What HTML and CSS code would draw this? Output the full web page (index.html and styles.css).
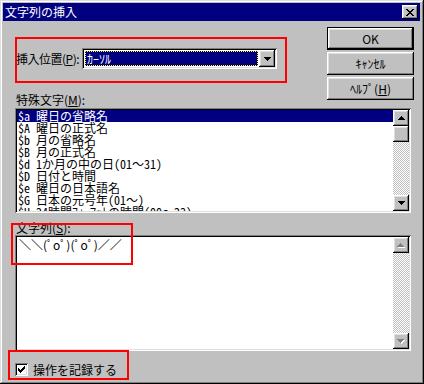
FILE: index.html
```html
<!DOCTYPE html>
<html lang="ja">
<head>
  <meta charset="UTF-8" />
  <title>文字列の挿入</title>
  <link rel="stylesheet" href="styles.css">
</head>
<body>
  <div class="window">
    <div class="titlebar">
      <span class="title">文字列の挿入</span>
      <span class="close raised">
        <svg width="8" height="7" viewBox="0 0 8 7" shape-rendering="crispEdges"><path d="M0 0h2v1h-2zM6 0h2v1h-2zM1 1h2v1h-2zM5 1h2v1h-2zM2 2h4v1h-4zM3 3h2v1h-2zM2 4h4v1h-4zM1 5h2v1h-2zM5 5h2v1h-2zM0 6h2v1h-2zM6 6h2v1h-2z" fill="#000"/></svg>
      </span>
    </div>

    <div class="dialog">
      <div class="top">
        <div class="left">
          <div class="pos-row">
            <span class="pos-label">挿入位置(<u>P</u>):</span>
            <div class="combo sunken">
              <div class="combo-value"><span class="focus">ｶｰｿﾙ</span></div>
              <div class="combo-btn raised">
                <svg width="7" height="4" viewBox="0 0 7 4" shape-rendering="crispEdges"><path d="M0 0h7v1h-7zM1 1h5v1h-5zM2 2h3v1h-3zM3 3h1v1h-1z" fill="#000"/></svg>
              </div>
            </div>
          </div>
          <div class="label label-list">特殊文字(<u>M</u>):</div>
        </div>
        <div class="buttons">
          <div class="btn btn-default"><span class="btn-face">OK</span></div>
          <div class="btn raised">ｷｬﾝｾﾙ</div>
          <div class="btn raised">ﾍﾙﾌﾟ(<u>H</u>)</div>
        </div>
      </div>

      <div class="listbox sunken">
        <ul class="items">
          <li class="selected">$a 曜日の省略名</li>
          <li>$A 曜日の正式名</li>
          <li>$b 月の省略名</li>
          <li>$B 月の正式名</li>
          <li>$d 1か月の中の日(01～31)</li>
          <li>$D 日付と時間</li>
          <li>$e 曜日の日本語名</li>
          <li>$G 日本の元号年(01～)</li>
          <li>$H 24時間ﾌｫｰﾏｯﾄの時間(00～23)</li>
        </ul>
        <div class="scrollbar">
          <div class="sb-btn raised">
            <svg width="7" height="4" viewBox="0 0 7 4" shape-rendering="crispEdges"><path d="M3 0h1v1h-1zM2 1h3v1h-3zM1 2h5v1h-5zM0 3h7v1h-7z" fill="#000"/></svg>
          </div>
          <div class="sb-thumb raised"></div>
          <div class="sb-track"></div>
          <div class="sb-btn raised">
            <svg width="7" height="4" viewBox="0 0 7 4" shape-rendering="crispEdges"><path d="M0 0h7v1h-7zM1 1h5v1h-5zM2 2h3v1h-3zM3 3h1v1h-1z" fill="#000"/></svg>
          </div>
        </div>
      </div>

      <div class="label label-text">文字列(<u>S</u>):</div>
      <div class="textbox sunken">
        <div class="text">＼＼(ﾟoﾟ)(ﾟoﾟ)／／</div>
        <div class="scrollbar">
          <div class="sb-btn raised">
            <svg width="8" height="5" viewBox="0 0 8 5" shape-rendering="crispEdges"><path d="M4 1h1v1h-1zM3 2h3v1h-3zM2 3h5v1h-5zM1 4h7v1h-7z" fill="#fff"/><path d="M3 0h1v1h-1zM2 1h3v1h-3zM1 2h5v1h-5zM0 3h7v1h-7z" fill="#808080"/></svg>
          </div>
          <div class="sb-track"></div>
          <div class="sb-btn raised">
            <svg width="8" height="5" viewBox="0 0 8 5" shape-rendering="crispEdges"><path d="M1 1h7v1h-7zM2 2h5v1h-5zM3 3h3v1h-3zM4 4h1v1h-1z" fill="#fff"/><path d="M0 0h7v1h-7zM1 1h5v1h-5zM2 2h3v1h-3zM3 3h1v1h-1z" fill="#808080"/></svg>
          </div>
        </div>
      </div>

      <div class="check-row">
        <span class="checkbox sunken">
          <svg width="7" height="7" viewBox="0 0 7 7" shape-rendering="crispEdges"><path d="M6 0h1v1h-1zM5 1h2v1h-2zM0 2h1v1h-1zM4 2h3v1h-3zM0 3h2v1h-2zM3 3h3v1h-3zM0 4h5v1h-5zM1 5h3v1h-3zM2 6h1v1h-1z" fill="#000"/></svg>
        </span>
        <span>操作を記録する</span>
      </div>
    </div>

    <div class="mark mark-pos"></div>
    <div class="mark mark-text"></div>
    <div class="mark mark-check"></div>
  </div>
</body>
</html>
```

FILE: styles.css
```css
:root {
  --face: #c0c0c0;
  --light: #dfdfdf;
  --shadow: #808080;
  --navy: #000080;
  --jp: "Noto Sans CJK JP", sans-serif;
  --jp-mono: "Noto Sans Mono CJK JP", "Noto Sans CJK JP", monospace;
}
* { box-sizing: border-box; }
body {
  margin: 0;
  background: var(--face);
  color: #000;
  font-family: var(--jp);
  font-size: 12px;
  line-height: 12px;
}
u { text-underline-offset: 1px; }

.raised {
  background: var(--face);
  box-shadow: inset -1px -1px #000, inset 1px 1px #fff, inset -2px -2px var(--shadow), inset 2px 2px var(--light);
}
.sunken {
  box-shadow: inset 1px 1px var(--shadow), inset -1px -1px #fff, inset 2px 2px #000, inset -2px -2px var(--light);
}

.window {
  position: relative;
  width: 424px;
  height: 384px;
  padding: 3px;
  background: var(--face);
  box-shadow: inset -1px -1px #000, inset 1px 1px var(--light), inset -2px -2px var(--shadow), inset 2px 2px #fff;
}
.titlebar {
  height: 18px;
  margin-right: 1px;
  padding: 0 2px 0 2px;
  background: var(--navy);
  color: #fff;
  display: flex;
  align-items: center;
  justify-content: space-between;
}
.title { line-height: 18px; }
.close {
  width: 16px;
  height: 14px;
  display: flex;
  align-items: center;
  justify-content: center;
}

.dialog {
  display: flex;
  flex-direction: column;
  padding: 0 10px 0 12px;
}
.top {
  display: flex;
  justify-content: space-between;
  height: 85px;
}
.left { display: flex; flex-direction: column; }
.pos-row {
  margin-top: 27px;
  height: 21px;
  display: flex;
  align-items: center;
}
.pos-label {
  width: 67px;
  flex: none;
  padding-left: 1px;
  white-space: nowrap;
  letter-spacing: -0.5px;
}
.label { padding-left: 1px; height: 12px; white-space: nowrap; }
.label-list { margin-top: 25px; }
.label-text { margin-top: 9px; }

.combo {
  width: 195px;
  height: 21px;
  padding: 2px;
  background: #fff;
  display: flex;
}
.combo-value {
  flex: 1;
  padding: 1px;
  display: flex;
}
.focus {
  flex: 1;
  background: var(--navy);
  color: #fff;
  border: 1px dotted #ffff00;
  padding-left: 1px;
  line-height: 13px;
}
.combo-btn {
  width: 16px;
  display: flex;
  align-items: center;
  justify-content: center;
}

.buttons {
  width: 87px;
  margin: 6px -3px 0 0;
  display: flex;
  flex-direction: column;
  gap: 2px;
}
.btn {
  height: 23px;
  display: flex;
  align-items: center;
  justify-content: center;
}
.btn-default {
  border: 1px solid #000;
}
.btn-default .btn-face {
  width: 100%;
  height: 100%;
  display: flex;
  align-items: center;
  justify-content: center;
  background: var(--face);
  box-shadow: inset -1px -1px #000, inset 1px 1px #fff, inset -2px -2px var(--shadow), inset 2px 2px var(--light);
}

.listbox {
  margin-top: 2px;
  height: 105px;
  padding: 2px;
  background: #fff;
  display: flex;
}
.items {
  flex: 1;
  margin: 0;
  padding: 0;
  list-style: none;
  overflow: hidden;
  font-family: var(--jp-mono);
}
.items li {
  height: 12px;
  padding-left: 1px;
  white-space: nowrap;
}
.items li.selected {
  background: var(--navy);
  color: #fff;
}

.scrollbar {
  width: 16px;
  display: flex;
  flex-direction: column;
}
.sb-btn {
  height: 16px;
  flex: none;
  display: flex;
  align-items: center;
  justify-content: center;
}
.sb-thumb { height: 16px; flex: none; }
.sb-track {
  flex: 1;
  background: repeating-conic-gradient(var(--face) 0 25%, #fff 0 50%) 0 0 / 2px 2px;
}

.textbox {
  margin-top: 1px;
  height: 116px;
  padding: 2px;
  background: #fff;
  display: flex;
}
.text {
  flex: 1;
  padding: 2px 0 0 2px;
  white-space: nowrap;
}

.check-row {
  margin-top: 12px;
  display: flex;
  align-items: center;
  gap: 5px;
  height: 13px;
}
.checkbox {
  width: 13px;
  height: 13px;
  background: #fff;
  display: flex;
  align-items: center;
  justify-content: center;
}

.mark {
  position: absolute;
  border: 2px solid #ff0000;
}
.mark-pos { left: 15px; top: 37px; width: 272px; height: 46px; }
.mark-text { left: 11px; top: 223px; width: 122px; height: 42px; }
.mark-check { left: 8px; top: 350px; width: 121px; height: 30px; }
```
